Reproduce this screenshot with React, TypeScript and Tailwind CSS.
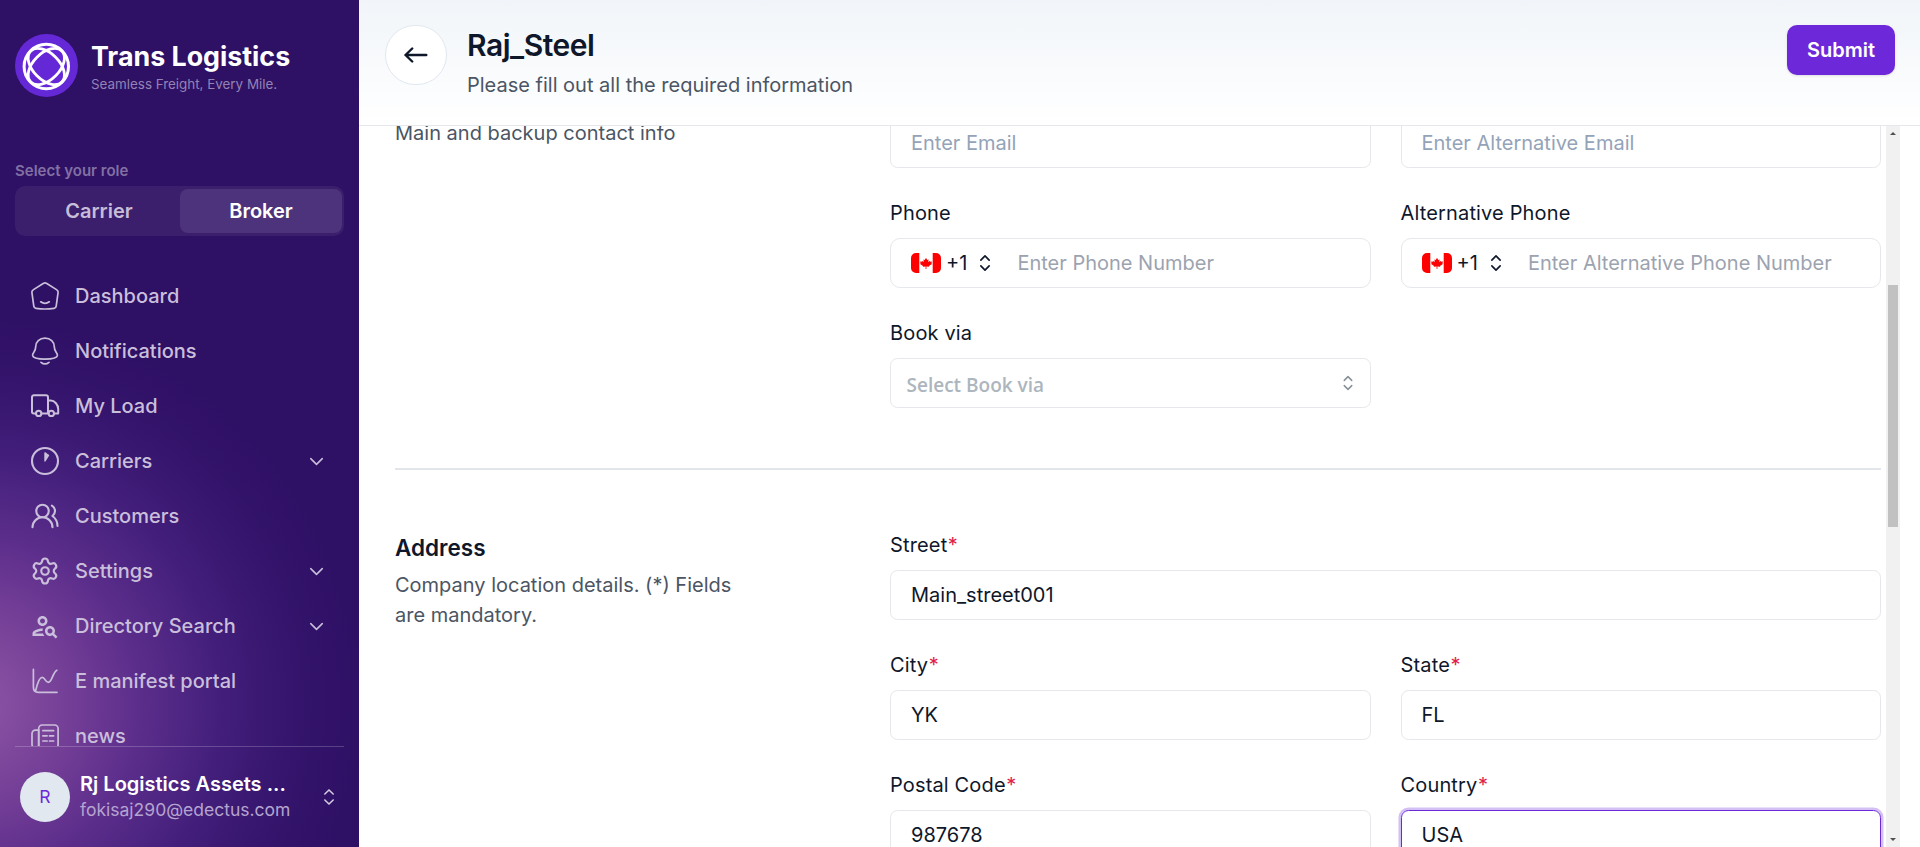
import type { ReactNode } from "react";
import { ChevronDown, Settings, UsersRound } from "lucide-react";
import { MdOutlinePersonSearch } from "react-icons/md";

function Line({ children, width = 1.7 }: { children: ReactNode; width?: number }) {
  return (
    <svg viewBox="0 0 30 30" className="size-[30px] shrink-0" fill="none" stroke="currentColor" strokeWidth={width} strokeLinecap="round" strokeLinejoin="round">
      {children}
    </svg>
  );
}

function UpDown({ className }: { className: string }) {
  return (
    <svg viewBox="0 0 24 24" className={className} fill="none" stroke="currentColor" strokeLinecap="round" strokeLinejoin="round">
      <path d="m7 15.5 5 5 5-5M7 8.5l5-5 5 5" />
    </svg>
  );
}

function Logo() {
  return (
    <svg viewBox="0 0 63 63" className="size-[63px] shrink-0" fill="none" stroke="#fff">
      <circle cx="31.5" cy="31.5" r="31.5" fill="#6528d7" stroke="none" />
      <circle cx="31.3" cy="32.5" r="22.2" strokeWidth="3" />
      <ellipse cx="31.3" cy="32.5" rx="22" ry="13.2" strokeWidth="2.8" transform="rotate(45 31.3 32.5)" />
      <ellipse cx="31.3" cy="32.5" rx="22" ry="13.2" strokeWidth="2.8" transform="rotate(-45 31.3 32.5)" />
    </svg>
  );
}

const NAV: { label: string; icon: ReactNode; more?: boolean }[] = [
  {
    label: "Dashboard",
    icon: (
      <Line>
        <path d="M13.6 2.3a2.5 2.5 0 0 1 2.8 0L26.9 8.9a2.5 2.5 0 0 1 1.2 2.5l-1.9 13.7a2.5 2.5 0 0 1-2.1 2.2c-6 .9-12.2.9-18.2 0a2.5 2.5 0 0 1-2.1-2.2L1.9 11.4a2.5 2.5 0 0 1 1.2-2.5z" />
        <path d="M10.7 20.8c2.6 1.9 6 1.9 8.6 0" />
      </Line>
    ),
  },
  {
    label: "Notifications",
    icon: (
      <Line>
        <path d="M15 2.2c-5.5 0-9.3 3.7-9.3 8.6 0 5.2-3.3 6-3.1 8.6.3 2.6 6.3 3.7 12.4 3.7s12.1-1.1 12.4-3.7c.2-2.6-3.1-3.4-3.1-8.6 0-4.9-3.8-8.6-9.3-8.6z" />
        <path d="M11 26.3c2.4 2 5.6 2 8 0" />
      </Line>
    ),
  },
  {
    label: "My Load",
    icon: (
      <Line width={2}>
        <path d="M6 22.4H3.7A1.7 1.7 0 0 1 2 20.7V6.2a2 2 0 0 1 2-2h12a2 2 0 0 1 2 2v16.2h-6.5M18 9.6h2.7c4 0 7.5 4.3 7.5 8.4v4.4h-4M18 22.4h.6" />
        <circle cx="8.7" cy="22.4" r="2.7" />
        <circle cx="21.3" cy="22.4" r="2.7" />
      </Line>
    ),
  },
  {
    label: "Carriers",
    more: true,
    icon: (
      <Line width={2.1}>
        <circle cx="15" cy="15" r="13" />
        <path d="M15 6.9v8.1l3.5-5.6-1.6-1z" fill="currentColor" strokeWidth="1.4" />
      </Line>
    ),
  },
  { label: "Customers", icon: <UsersRound size={30} strokeWidth={1.7} /> },
  { label: "Settings", more: true, icon: <Settings size={30} strokeWidth={1.75} /> },
  { label: "Directory Search", more: true, icon: <MdOutlinePersonSearch size={30} /> },
  {
    label: "E manifest portal",
    icon: (
      <Line>
        <path d="M3.4 3.3v18c0 3.6 1.3 5 5 5H27" />
        <path d="M5.6 24.8c1.4-6 3.2-13.4 6.5-13.4 3.2 0 3 4.9 6.2 4.9 3.8 0 4.2-9.5 8.5-12" />
      </Line>
    ),
  },
  {
    label: "news",
    icon: (
      <Line>
        <rect x="8.7" y="4" width="19.4" height="23" rx="3.5" />
        <path d="M8.7 9.2H5.5A3.5 3.5 0 0 0 2 12.7v10.5A3.6 3.6 0 0 0 5.5 27h7M8.7 9v14.2A3.6 3.6 0 0 1 5.5 27M12.9 9.7h10.7M12.9 14.8h4.2M19.5 14.8h4.1M12.9 20h4.2M19.5 20h4.1" />
      </Line>
    ),
  },
];

function Sidebar() {
  return (
    <aside className="flex h-full w-[359px] shrink-0 flex-col bg-[#2e1065] bg-[radial-gradient(ellipse_390px_390px_at_-30px_705px,#8c55a2_0%,#844da0_10%,#733e96_26%,#5b2d8b_44%,#431f7b_64%,#35156d_82%,#2e1065_100%)] px-[15px]">
      <div className="flex h-[97px] items-end gap-[13px]">
        <Logo />
        <div className="mb-[2px] flex flex-col">
          <span className="text-[26.8px] leading-[32px] font-bold text-white">Trans Logistics</span>
          <span className="mt-[1px] text-[13.4px] leading-[22px] text-[#9383b4]">Seamless Freight, Every Mile.</span>
        </div>
      </div>
      <div className="mt-[61px] text-[15px] leading-[25px] font-semibold text-[#8270a3]">Select your role</div>
      <div className="mt-[3px] flex h-[50px] w-[329px] shrink-0 rounded-[10px] bg-[#3b1f6c] py-[3px] pr-[2px] pl-[3px] text-[20px] font-semibold">
        <div className="flex flex-1 items-center justify-center text-[#c7bdd8]">Carrier</div>
        <div className="flex flex-1 items-center justify-center rounded-[8px] bg-[#4d337b] text-white">Broker</div>
      </div>
      <nav className="mt-[35px] flex h-[475px] shrink-0 flex-col gap-[5px] overflow-hidden pr-[15px] pl-[15px] text-[#cabfdb]">
        {NAV.map((n) => (
          <div key={n.label} className="flex h-[50px] shrink-0 items-center">
            {n.icon}
            <span className="ml-[15px] flex-1 text-[20px] leading-[30px] font-medium">{n.label}</span>
            {n.more && <ChevronDown size={23} strokeWidth={1.6} className="mr-[1px]" />}
          </div>
        ))}
      </nav>
      <div className="flex flex-1 items-center border-t border-white/20 pr-[5px] pl-[5px]">
        <div className="flex size-[50px] shrink-0 items-center justify-center rounded-full bg-[#e2e8f0] text-[17.5px] text-[#6d28d9]">R</div>
        <div className="mb-[2px] ml-[10px] flex flex-1 flex-col whitespace-nowrap">
          <span className="text-[20px] leading-[26px] font-semibold text-white">Rj Logistics Assets ...</span>
          <span className="text-[17.5px] leading-[25px] text-[#b5a4cf]">fokisaj290@edectus.com</span>
        </div>
        <UpDown className="size-5 text-[#d5cce2] [stroke-width:1.8]" />
      </div>
    </aside>
  );
}

function Flag() {
  return (
    <svg viewBox="0 0 30 20" className="h-5 w-[30px] shrink-0">
      <path d="M5 0h3.3v20H5a5 5 0 0 1-5-5V5a5 5 0 0 1 5-5zM21.7 0H25a5 5 0 0 1 5 5v10a5 5 0 0 1-5 5h-3.3z" fill="#f00" />
      <path d="M15 4.8l1.2 2.1 1.4-.5-.4 2.7 1.7-1.2.5.9 1.6-.2-.6 1.6.5.7-2.9 2.2.2.7-2.8-.3v2.5h-.8v-2.5l-2.8.3.2-.7-2.9-2.2.5-.7-.6-1.6 1.6.2.5-.9 1.7 1.2-.4-2.7 1.4.5z" fill="#f00" />
    </svg>
  );
}

function Field({ label, required, wide, children }: { label: string; required?: boolean; wide?: boolean; children: ReactNode }) {
  return (
    <div className={wide ? "col-span-2 flex flex-col gap-[10px]" : "flex flex-col gap-[10px]"}>
      <div className="text-[20px] leading-[30px] tracking-[0.15px] text-[#0f172a]">
        {label}
        {required && <span className="ml-[0.5px] text-[#e11d48]">*</span>}
      </div>
      {children}
    </div>
  );
}

function Box({ value, placeholder, focused }: { value?: string; placeholder?: string; focused?: boolean }) {
  return (
    <div
      className={
        focused
          ? "flex h-[50px] items-center rounded-[7.5px] border border-[#6d28d9] px-5 text-[20px] text-[#0f172a] shadow-[0_0_0_2.5px_#d3c0f4]"
          : "flex h-[50px] items-center rounded-[7.5px] border border-[#e5e7eb] px-5 text-[20px] text-[#0f172a]"
      }
    >
      {value ?? <span className="text-[#94a3b8]">{placeholder}</span>}
    </div>
  );
}

function PhoneBox({ placeholder }: { placeholder: string }) {
  return (
    <div className="flex h-[50px] items-center rounded-[10px] border border-[#e5e7eb] pl-5 text-[20px] text-[#0f172a]">
      <Flag />
      <span className="ml-[5px]">+1</span>
      <UpDown className="ml-[8px] size-5 [stroke-width:2]" />
      <span className="ml-[22px] text-[#9ca3af]">{placeholder}</span>
    </div>
  );
}

export default function App() {
  return (
    <div className="flex h-[847px] w-[1920px] overflow-hidden bg-white font-['Inter',sans-serif]">
      <Sidebar />
      <main className="flex min-w-0 flex-1 flex-col">
        <header className="flex h-[126px] shrink-0 items-start border-b border-[#e5e7eb] bg-gradient-to-b from-[#f1f5f9] to-white pt-[25px] pr-[25px] pl-[26px]">
          <div className="flex h-[60px] w-[62px] shrink-0 items-center justify-center rounded-full border border-[#e2e8f0] bg-white text-[#0f172a]">
            <svg viewBox="0 0 24 16" className="mr-[1px] h-4 w-6" fill="none" stroke="currentColor" strokeWidth="2.4" strokeLinecap="round" strokeLinejoin="round">
              <path d="M22.3 8H1.5M8.2 1.5L1.5 8l6.7 6.5" />
            </svg>
          </div>
          <div className="ml-5 flex flex-1 flex-col">
            <h1 className="text-[30px] leading-[40px] font-semibold tracking-[-0.016em] text-[#0f172a]">Raj_Steel</h1>
            <p className="mt-[5px] text-[20px] leading-[30px] text-[#4b5563]">Please fill out all the required information</p>
          </div>
          <button className="flex h-[50px] w-[108px] items-center justify-center rounded-[10px] bg-[#6d28d9] text-[20px] font-semibold text-white shadow-sm">Submit</button>
        </header>
        <div className="flex min-h-0 flex-1">
          <div className="flex min-w-0 flex-1 flex-col overflow-hidden pr-[5px] pl-[36px]">
            <div className="-mt-[8px] flex flex-col">
              <section className="flex shrink-0">
                <p className="w-[495px] shrink-0 text-[20px] leading-[30px] text-[#4b5563]">Main and backup contact info</p>
                <div className="grid flex-1 grid-cols-2 gap-[30px]">
                  <Box placeholder="Enter Email" />
                  <Box placeholder="Enter Alternative Email" />
                  <Field label="Phone">
                    <PhoneBox placeholder="Enter Phone Number" />
                  </Field>
                  <Field label="Alternative Phone">
                    <PhoneBox placeholder="Enter Alternative Phone Number" />
                  </Field>
                  <Field label="Book via">
                    <div className="flex h-[50px] items-center justify-between rounded-[7.5px] border border-[#e5e7eb] pr-[13px] pl-[15.5px]">
                      <span className="pt-1 font-['Open_Sans','Noto_Sans',sans-serif] text-[19px] font-semibold text-[#adb5bd]">Select Book via</span>
                      <UpDown className="size-[18px] text-[#868e96] [stroke-width:1.9]" />
                    </div>
                  </Field>
                </div>
              </section>
              <div className="my-[60px] h-[2px] shrink-0 bg-[#e2e6eb]" />
              <section className="flex shrink-0">
                <div className="w-[495px] shrink-0">
                  <h2 className="text-[22.5px] leading-[35px] font-semibold text-[#0f172a]">Address</h2>
                  <p className="mt-[5px] w-[360px] text-[20px] leading-[30px] text-[#4b5563]">Company location details. (*) Fields are mandatory.</p>
                </div>
                <div className="grid flex-1 grid-cols-2 gap-[30px]">
                  <Field label="Street" required wide>
                    <Box value="Main_street001" />
                  </Field>
                  <Field label="City" required>
                    <Box value="YK" />
                  </Field>
                  <Field label="State" required>
                    <Box value="FL" />
                  </Field>
                  <Field label="Postal Code" required>
                    <Box value="987678" />
                  </Field>
                  <Field label="Country" required>
                    <Box value="USA" focused />
                  </Field>
                </div>
              </section>
            </div>
          </div>
          <div className="mr-5 flex w-[14px] shrink-0 flex-col items-center justify-between bg-[#f1f1f1]">
            <svg viewBox="0 0 6 3" className="mt-[6px] h-[3px] w-[6px]" fill="#505050">
              <path d="M0 3L3 0l3 3z" />
            </svg>
            <div className="mt-[150px] h-[242px] w-[10px] shrink-0 bg-[#c1c1c1]" />
            <div className="flex-1" />
            <svg viewBox="0 0 6 3" className="mb-[6px] h-[3px] w-[6px]" fill="#505050">
              <path d="M0 0l3 3 3-3z" />
            </svg>
          </div>
        </div>
      </main>
    </div>
  );
}
